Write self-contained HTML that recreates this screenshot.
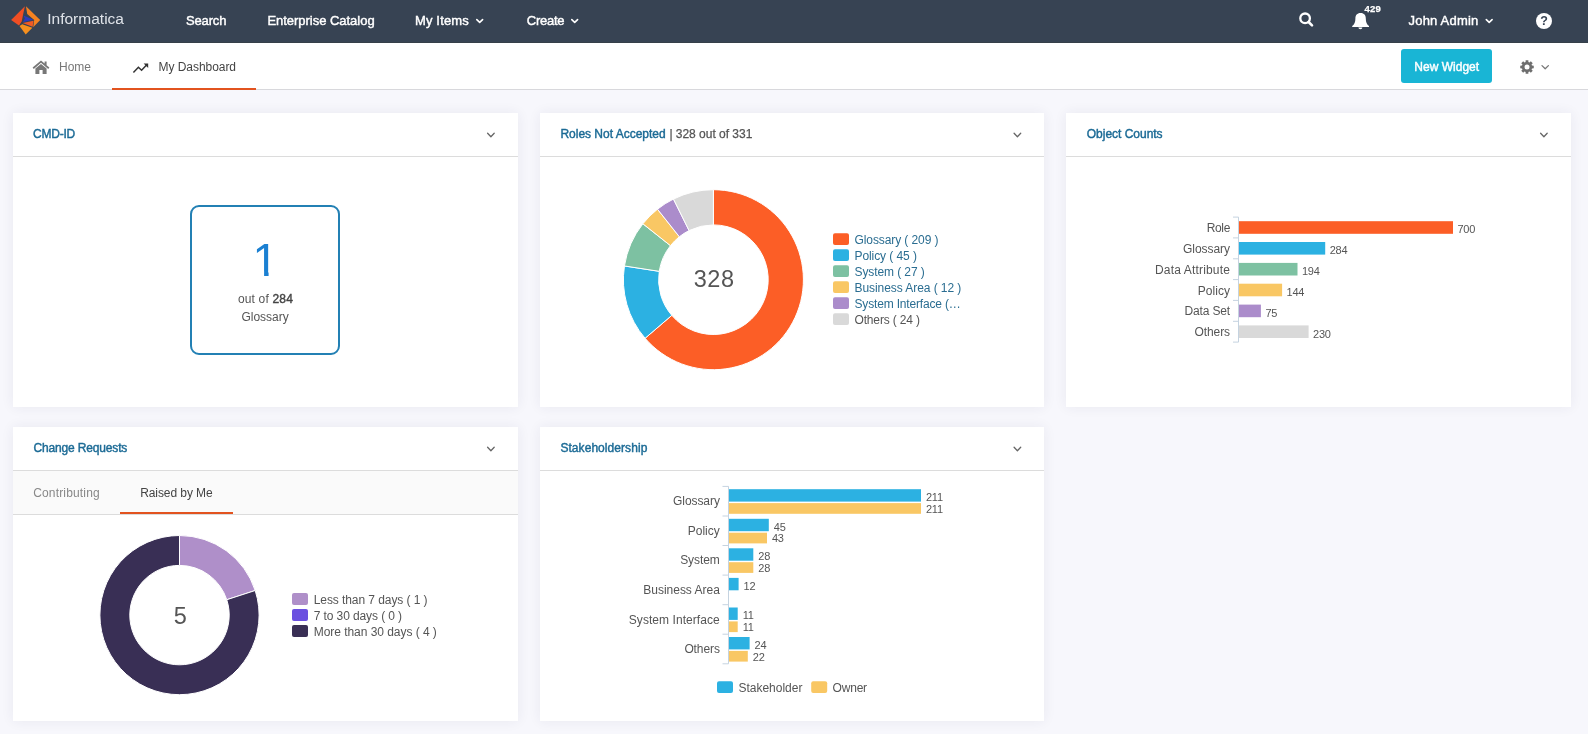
<!DOCTYPE html>
<html><head><meta charset="utf-8"><title>My Dashboard</title>
<style>
html,body{margin:0;padding:0;}
body{width:1588px;height:734px;overflow:hidden;background:#f7f7fc;font-family:"Liberation Sans", Arial, sans-serif;position:relative;}
.nav{position:absolute;left:0;top:0;width:1588px;height:42px;background:#374353;border-bottom:1px solid #364049;}
.sub{position:absolute;left:0;top:43px;width:1588px;height:46px;background:#fff;border-bottom:1px solid #d8d8dc;}
.tabline{position:absolute;left:112px;top:88px;width:144px;height:2px;background:#e2531f;}
.btn{position:absolute;left:1401px;top:49px;width:91px;height:34px;background:#19b5d5;border-radius:3px;}
.card{position:absolute;width:505px;height:294px;background:#fff;box-shadow:0 0 12px rgba(40,40,90,0.07);}
.card .hd{position:absolute;left:0;top:0;width:100%;height:43px;border-bottom:1px solid #dcdcdc;}
.tabs{position:absolute;left:0;top:44px;width:100%;height:43px;background:#fafafa;border-bottom:1px solid #dcdcdc;}
.tabs i{position:absolute;left:107px;top:40.5px;width:113px;height:2.5px;background:#e2531f;}
.box{position:absolute;left:190px;top:205px;width:146px;height:146px;border:2px solid #2380b4;border-radius:9px;}
.t{position:absolute;white-space:nowrap;line-height:1;}
svg.ov{position:absolute;left:0;top:0;}
.txt{position:absolute;left:0;top:0;width:1588px;height:734px;will-change:transform;}
.q{position:absolute;left:1536px;top:13px;width:16px;height:16px;text-align:center;font-size:12.5px;line-height:16px;font-weight:bold;color:#374353;}
</style></head><body>
<div class="nav"></div>
<div class="sub"></div>
<div class="tabline"></div>
<div class="btn"></div>
<div class="card" style="left:13px;top:113px"><div class="hd"></div></div>
<div class="card" style="left:540px;top:113px;width:504px"><div class="hd"></div></div>
<div class="card" style="left:1066px;top:113px"><div class="hd"></div></div>
<div class="card" style="left:13px;top:427px"><div class="hd"></div><div class="tabs"><i></i></div></div>
<div class="card" style="left:540px;top:427px;width:504px"><div class="hd"></div></div>
<div class="box"></div>
<svg class="ov" width="1588" height="734" viewBox="0 0 1588 734">
<path d="M713.40 189.70A90 90 0 1 1 645.08 338.28L671.80 315.37A54.8 54.8 0 1 0 713.40 224.90Z" fill="#fc5e26" stroke="#fff" stroke-width="1" stroke-linejoin="round"/>
<path d="M645.08 338.28A90 90 0 0 1 624.45 265.96L659.24 271.33A54.8 54.8 0 0 0 671.80 315.37Z" fill="#2cb1e2" stroke="#fff" stroke-width="1" stroke-linejoin="round"/>
<path d="M624.45 265.96A90 90 0 0 1 642.88 223.78L670.46 245.65A54.8 54.8 0 0 0 659.24 271.33Z" fill="#7dc1a2" stroke="#fff" stroke-width="1" stroke-linejoin="round"/>
<path d="M642.88 223.78A90 90 0 0 1 657.48 209.18L679.35 236.76A54.8 54.8 0 0 0 670.46 245.65Z" fill="#f9c764" stroke="#fff" stroke-width="1" stroke-linejoin="round"/>
<path d="M657.48 209.18A90 90 0 0 1 673.47 199.05L689.08 230.59A54.8 54.8 0 0 0 679.35 236.76Z" fill="#ab8ccb" stroke="#fff" stroke-width="1" stroke-linejoin="round"/>
<path d="M673.47 199.05A90 90 0 0 1 713.40 189.70L713.40 224.90A54.8 54.8 0 0 0 689.08 230.59Z" fill="#d9d9d9" stroke="#fff" stroke-width="1" stroke-linejoin="round"/>
<rect x="833" y="233.3" width="16" height="11.6" rx="2" fill="#fc5e26"/>
<rect x="833" y="249.3" width="16" height="11.6" rx="2" fill="#2cb1e2"/>
<rect x="833" y="265.3" width="16" height="11.6" rx="2" fill="#7dc1a2"/>
<rect x="833" y="281.3" width="16" height="11.6" rx="2" fill="#f9c764"/>
<rect x="833" y="297.3" width="16" height="11.6" rx="2" fill="#ab8ccb"/>
<rect x="833" y="313.3" width="16" height="11.6" rx="2" fill="#d9d9d9"/>
<path d="M1238.5 217.1V342.1" stroke="#c5d3e0" stroke-width="1" fill="none"/>
<path d="M1233 217.1H1238.5" stroke="#c5d3e0" stroke-width="1"/>
<path d="M1233 237.9H1238.5" stroke="#c5d3e0" stroke-width="1"/>
<path d="M1233 258.8H1238.5" stroke="#c5d3e0" stroke-width="1"/>
<path d="M1233 279.6H1238.5" stroke="#c5d3e0" stroke-width="1"/>
<path d="M1233 300.4H1238.5" stroke="#c5d3e0" stroke-width="1"/>
<path d="M1233 321.3H1238.5" stroke="#c5d3e0" stroke-width="1"/>
<path d="M1233 342.1H1238.5" stroke="#c5d3e0" stroke-width="1"/>
<rect x="1239" y="221.2" width="214.0" height="12.6" fill="#fc5e26"/>
<rect x="1239" y="242.0" width="86.2" height="12.6" fill="#2cb1e2"/>
<rect x="1239" y="262.9" width="58.5" height="12.6" fill="#7dc1a2"/>
<rect x="1239" y="283.7" width="43.1" height="12.6" fill="#f9c764"/>
<rect x="1239" y="304.6" width="21.9" height="12.6" fill="#ab8ccb"/>
<rect x="1239" y="325.4" width="69.6" height="12.6" fill="#d9d9d9"/>
<path d="M179.50 535.50A79.6 79.6 0 0 1 255.20 590.50L226.77 599.74A49.7 49.7 0 0 0 179.50 565.40Z" fill="#af8fc9" stroke="#fff" stroke-width="1" stroke-linejoin="round"/>
<path d="M255.20 590.50A79.6 79.6 0 1 1 179.50 535.50L179.50 565.40A49.7 49.7 0 1 0 226.77 599.74Z" fill="#392f55" stroke="#fff" stroke-width="1" stroke-linejoin="round"/>
<rect x="292" y="593.1" width="16" height="11.8" rx="2" fill="#af8fc9"/>
<rect x="292" y="609.1" width="16" height="11.8" rx="2" fill="#6b50e0"/>
<rect x="292" y="625.1" width="16" height="11.8" rx="2" fill="#392f55"/>
<path d="M728.5 486.4V663.8" stroke="#c5d3e0" stroke-width="1" fill="none"/>
<path d="M722.5 486.4H728.5" stroke="#c5d3e0" stroke-width="1"/>
<path d="M722.5 516.0H728.5" stroke="#c5d3e0" stroke-width="1"/>
<path d="M722.5 545.5H728.5" stroke="#c5d3e0" stroke-width="1"/>
<path d="M722.5 575.1H728.5" stroke="#c5d3e0" stroke-width="1"/>
<path d="M722.5 604.7H728.5" stroke="#c5d3e0" stroke-width="1"/>
<path d="M722.5 634.2H728.5" stroke="#c5d3e0" stroke-width="1"/>
<path d="M722.5 663.8H728.5" stroke="#c5d3e0" stroke-width="1"/>
<rect x="729" y="489.2" width="192.0" height="12.4" fill="#2cb1e2"/>
<rect x="729" y="503.1" width="192.0" height="10.7" fill="#f9c764"/>
<rect x="729" y="518.8" width="39.8" height="12.4" fill="#2cb1e2"/>
<rect x="729" y="532.7" width="38.0" height="10.7" fill="#f9c764"/>
<rect x="729" y="548.3" width="24.3" height="12.4" fill="#2cb1e2"/>
<rect x="729" y="562.2" width="24.3" height="10.7" fill="#f9c764"/>
<rect x="729" y="577.9" width="9.6" height="12.4" fill="#2cb1e2"/>
<rect x="729" y="607.5" width="8.7" height="12.4" fill="#2cb1e2"/>
<rect x="729" y="621.4" width="8.7" height="10.7" fill="#f9c764"/>
<rect x="729" y="637.0" width="20.6" height="12.4" fill="#2cb1e2"/>
<rect x="729" y="650.9" width="18.8" height="10.7" fill="#f9c764"/>
<rect x="717" y="681.3" width="16" height="11.8" rx="2" fill="#2cb1e2"/>
<rect x="811.2" y="681.3" width="16" height="11.8" rx="2" fill="#f9c764"/>
<path d="M476.8 19.6L479.7 22.4L482.6 19.6" stroke="#fff" stroke-width="1.6" fill="none" stroke-linecap="round" stroke-linejoin="round"/>
<path d="M571.8 19.6L574.7 22.4L577.6 19.6" stroke="#fff" stroke-width="1.6" fill="none" stroke-linecap="round" stroke-linejoin="round"/>
<path d="M1486.3 19.6L1489.2 22.4L1492.1 19.6" stroke="#fff" stroke-width="1.6" fill="none" stroke-linecap="round" stroke-linejoin="round"/>
<path d="M1542.0 65.6L1545.2 68.8L1548.4 65.6" stroke="#777" stroke-width="1.3" fill="none" stroke-linecap="round" stroke-linejoin="round"/>
<path d="M487.6 133.3L490.9 136.7L494.2 133.3" stroke="#666" stroke-width="1.3" fill="none" stroke-linecap="round" stroke-linejoin="round"/>
<path d="M487.6 447.3L490.9 450.7L494.2 447.3" stroke="#666" stroke-width="1.3" fill="none" stroke-linecap="round" stroke-linejoin="round"/>
<path d="M1014.1 133.3L1017.4 136.7L1020.7 133.3" stroke="#666" stroke-width="1.3" fill="none" stroke-linecap="round" stroke-linejoin="round"/>
<path d="M1014.1 447.3L1017.4 450.7L1020.7 447.3" stroke="#666" stroke-width="1.3" fill="none" stroke-linecap="round" stroke-linejoin="round"/>
<path d="M1540.6 133.3L1543.9 136.7L1547.2 133.3" stroke="#666" stroke-width="1.3" fill="none" stroke-linecap="round" stroke-linejoin="round"/>
<g>
<path d="M24.9 6.3L11.1 20L19 25.5L21.7 21.5L23.1 14.4Z" fill="#f04e23"/>
<path d="M26 6.3L40.2 20L33.2 27.2L34.2 20L27.2 14Z" fill="#f58220"/>
<path d="M19.5 26L25.7 34.5L32.4 27.8L22.2 24.2Z" fill="#f7901e"/>
<path d="M22.6 23L33.6 20.8L32.6 26.8Z" fill="#f15a24"/>
<path d="M23.6 15.4L33.2 19.8L22.8 22.2L24.8 18.8Z" fill="#2b3bbd"/>
</g>
<circle cx="1305.1" cy="18.3" r="4.8" stroke="#fff" stroke-width="2.3" fill="none"/><path d="M1308.6 22L1312 25.4" stroke="#fff" stroke-width="2.6" stroke-linecap="round"/>
<path d="M1360.4 13c-3.3 0-5 2.4-5 5.4c0 3.6-1 5.8-3.2 7.6v1h16.8v-1c-2.2-1.8-3.2-4-3.2-7.6c0-3-1.7-5.4-5-5.4z" fill="#fff"/><path d="M1358.4 27.4a2 1.8 0 0 0 4 0z" fill="#fff"/>
<circle cx="1544" cy="21" r="8" fill="#fff"/>
<path d="M41 60.4L32.6 67.6L33.8 68.9L41 62.8L48.2 68.9L49.4 67.6L46.6 65.2V61.4H44.6V63.5Z" fill="#777"/><path d="M35.4 68.6L41 63.9L46.6 68.6V74H42.6V70H39.4V74H35.4Z" fill="#777"/>
<path d="M133.4 72.4L138.4 67.2L141.6 70.2L147 64.6" stroke="#333" stroke-width="1.5" fill="none" stroke-linejoin="miter"/><path d="M143.6 63.4H148.2V68Z" fill="#333"/>
<path d="M1533.76 65.63L1533.76 68.37L1532.01 68.39L1531.52 69.56L1532.75 70.81L1530.81 72.75L1529.56 71.52L1528.39 72.01L1528.37 73.76L1525.63 73.76L1525.61 72.01L1524.44 71.52L1523.19 72.75L1521.25 70.81L1522.48 69.56L1521.99 68.39L1520.24 68.37L1520.24 65.63L1521.99 65.61L1522.48 64.44L1521.25 63.19L1523.19 61.25L1524.44 62.48L1525.61 61.99L1525.63 60.24L1528.37 60.24L1528.39 61.99L1529.56 62.48L1530.81 61.25L1532.75 63.19L1531.52 64.44L1532.01 65.61ZM1529.5 67a2.5 2.5 0 1 0 -5 0a2.5 2.5 0 1 0 5 0Z" fill="#6e6e6e" fill-rule="evenodd"/></svg>
<div class="txt">
<div class="q">?</div>
<div class="t" style="left:47.2px;top:11px;font-size:15.5px;color:#dfe3e9;letter-spacing:0.012px;">Informatica</div>
<div class="t" style="left:186.0px;top:14px;font-size:13px;color:#fff;-webkit-text-stroke:0.42px #fff;letter-spacing:-0.167px;">Search</div>
<div class="t" style="left:267.4px;top:14px;font-size:13px;color:#fff;-webkit-text-stroke:0.42px #fff;letter-spacing:-0.026px;">Enterprise Catalog</div>
<div class="t" style="left:414.9px;top:14px;font-size:13px;color:#fff;-webkit-text-stroke:0.42px #fff;letter-spacing:0.171px;">My Items</div>
<div class="t" style="left:526.8px;top:14px;font-size:13px;color:#fff;-webkit-text-stroke:0.42px #fff;letter-spacing:-0.272px;">Create</div>
<div class="t" style="left:1364.6px;top:4px;font-size:9.5px;color:#fff;font-weight:bold;-webkit-text-stroke:0.25px #fff;letter-spacing:0.180px;">429</div>
<div class="t" style="left:1408.6px;top:14px;font-size:13px;color:#fff;-webkit-text-stroke:0.42px #fff;letter-spacing:0.186px;">John Admin</div>
<div class="t" style="left:59.0px;top:61px;font-size:12px;color:#777;letter-spacing:-0.004px;">Home</div>
<div class="t" style="left:158.5px;top:61px;font-size:12px;color:#444;letter-spacing:-0.046px;">My Dashboard</div>
<div class="t" style="left:1414.3px;top:61px;font-size:12px;color:#fff;-webkit-text-stroke:0.42px #fff;letter-spacing:0.011px;">New Widget</div>
<div class="t" style="left:33.0px;top:128px;font-size:12px;color:#1b6a95;-webkit-text-stroke:0.42px #1b6a95;letter-spacing:-0.221px;">CMD-ID</div>
<div class="t" style="left:560.4px;top:128px;font-size:12px;color:#1b6a95;-webkit-text-stroke:0.42px #1b6a95;letter-spacing:-0.006px;">Roles Not Accepted</div>
<div class="t" style="left:669.4px;top:128px;font-size:12px;color:#555;-webkit-text-stroke:0.25px #555;letter-spacing:-0.018px;">| 328 out of 331</div>
<div class="t" style="left:1086.8px;top:128px;font-size:12px;color:#1b6a95;-webkit-text-stroke:0.42px #1b6a95;letter-spacing:-0.019px;">Object Counts</div>
<div class="t" style="left:33.4px;top:442px;font-size:12px;color:#1b6a95;-webkit-text-stroke:0.42px #1b6a95;letter-spacing:-0.152px;">Change Requests</div>
<div class="t" style="left:560.4px;top:442px;font-size:12px;color:#1b6a95;-webkit-text-stroke:0.42px #1b6a95;letter-spacing:0.062px;">Stakeholdership</div>
<div class="t" style="left:252.6px;top:237px;font-size:46px;color:#1b80d2;clip-path:polygon(0 0,100% 0,100% 34.6px,16px 34.6px,16px 100%,11.5px 100%,11.5px 34.6px,0 34.6px);">1</div>
<div class="t" style="left:237.9px;top:293px;font-size:12px;color:#555;letter-spacing:0.171px;">out of <b style="font-weight:normal;-webkit-text-stroke:0.4px #444;color:#444">284</b></div>
<div class="t" style="left:241.4px;top:311px;font-size:12px;color:#555;letter-spacing:0.007px;">Glossary</div>
<div class="t" style="left:693.8px;top:268px;font-size:23.5px;color:#555;letter-spacing:0.494px;">328</div>
<div class="t" style="left:854.5px;top:234px;font-size:12px;color:#2a6d91;letter-spacing:-0.091px;">Glossary ( 209 )</div>
<div class="t" style="left:854.5px;top:250px;font-size:12px;color:#2a6d91;letter-spacing:-0.081px;">Policy ( 45 )</div>
<div class="t" style="left:854.5px;top:266px;font-size:12px;color:#2a6d91;letter-spacing:-0.097px;">System ( 27 )</div>
<div class="t" style="left:854.5px;top:282px;font-size:12px;color:#2a6d91;letter-spacing:-0.063px;">Business Area ( 12 )</div>
<div class="t" style="left:854.5px;top:298px;font-size:12px;color:#2a6d91;letter-spacing:-0.172px;">System Interface (…</div>
<div class="t" style="left:854.5px;top:314px;font-size:12px;color:#555;letter-spacing:-0.158px;">Others ( 24 )</div>
<div class="t" style="left:1206.7px;top:222px;font-size:12px;color:#555;letter-spacing:-0.347px;">Role</div>
<div class="t" style="left:1457.5px;top:224px;font-size:11px;color:#555;letter-spacing:-0.270px;">700</div>
<div class="t" style="left:1183.0px;top:243px;font-size:12px;color:#555;letter-spacing:-0.043px;">Glossary</div>
<div class="t" style="left:1329.7px;top:245px;font-size:11px;color:#555;letter-spacing:-0.270px;">284</div>
<div class="t" style="left:1155.0px;top:264px;font-size:12px;color:#555;letter-spacing:0.163px;">Data Attribute</div>
<div class="t" style="left:1302.0px;top:266px;font-size:11px;color:#555;letter-spacing:-0.270px;">194</div>
<div class="t" style="left:1197.8px;top:285px;font-size:12px;color:#555;letter-spacing:0.031px;">Policy</div>
<div class="t" style="left:1286.6px;top:287px;font-size:11px;color:#555;letter-spacing:-0.270px;">144</div>
<div class="t" style="left:1184.6px;top:305px;font-size:12px;color:#555;letter-spacing:-0.163px;">Data Set</div>
<div class="t" style="left:1265.4px;top:308px;font-size:11px;color:#555;letter-spacing:-0.270px;">75</div>
<div class="t" style="left:1194.5px;top:326px;font-size:12px;color:#555;letter-spacing:-0.086px;">Others</div>
<div class="t" style="left:1313.1px;top:329px;font-size:11px;color:#555;letter-spacing:-0.270px;">230</div>
<div class="t" style="left:33.2px;top:487px;font-size:12px;color:#888;letter-spacing:0.165px;">Contributing</div>
<div class="t" style="left:140.2px;top:487px;font-size:12px;color:#444;letter-spacing:-0.081px;">Raised by Me</div>
<div class="t" style="left:173.8px;top:605px;font-size:23.5px;color:#555;">5</div>
<div class="t" style="left:313.7px;top:594px;font-size:12px;color:#555;letter-spacing:-0.073px;">Less than 7 days ( 1 )</div>
<div class="t" style="left:313.7px;top:610px;font-size:12px;color:#555;letter-spacing:-0.097px;">7 to 30 days ( 0 )</div>
<div class="t" style="left:313.7px;top:626px;font-size:12px;color:#555;letter-spacing:-0.042px;">More than 30 days ( 4 )</div>
<div class="t" style="left:673.1px;top:495px;font-size:12px;color:#555;letter-spacing:-0.080px;">Glossary</div>
<div class="t" style="left:926.0px;top:492px;font-size:11px;color:#555;letter-spacing:-0.270px;">211</div>
<div class="t" style="left:926.0px;top:504px;font-size:11px;color:#555;letter-spacing:-0.270px;">211</div>
<div class="t" style="left:687.7px;top:525px;font-size:12px;color:#555;letter-spacing:0.014px;">Policy</div>
<div class="t" style="left:773.8px;top:522px;font-size:11px;color:#555;letter-spacing:-0.270px;">45</div>
<div class="t" style="left:772.0px;top:533px;font-size:11px;color:#555;letter-spacing:-0.270px;">43</div>
<div class="t" style="left:680.2px;top:554px;font-size:12px;color:#555;letter-spacing:-0.069px;">System</div>
<div class="t" style="left:758.3px;top:551px;font-size:11px;color:#555;letter-spacing:-0.270px;">28</div>
<div class="t" style="left:758.3px;top:563px;font-size:11px;color:#555;letter-spacing:-0.270px;">28</div>
<div class="t" style="left:643.3px;top:584px;font-size:12px;color:#555;letter-spacing:-0.017px;">Business Area</div>
<div class="t" style="left:743.6px;top:581px;font-size:11px;color:#555;letter-spacing:-0.270px;">12</div>
<div class="t" style="left:628.8px;top:614px;font-size:12px;color:#555;letter-spacing:0.060px;">System Interface</div>
<div class="t" style="left:742.7px;top:610px;font-size:11px;color:#555;letter-spacing:-0.270px;">11</div>
<div class="t" style="left:742.7px;top:622px;font-size:11px;color:#555;letter-spacing:-0.270px;">11</div>
<div class="t" style="left:684.4px;top:643px;font-size:12px;color:#555;letter-spacing:-0.103px;">Others</div>
<div class="t" style="left:754.6px;top:640px;font-size:11px;color:#555;letter-spacing:-0.270px;">24</div>
<div class="t" style="left:752.8px;top:652px;font-size:11px;color:#555;letter-spacing:-0.270px;">22</div>
<div class="t" style="left:738.4px;top:682px;font-size:12px;color:#555;letter-spacing:-0.004px;">Stakeholder</div>
<div class="t" style="left:832.6px;top:682px;font-size:12px;color:#555;letter-spacing:-0.209px;">Owner</div>
</div>
</body></html>
